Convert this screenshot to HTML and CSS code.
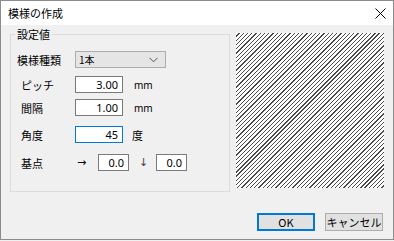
FILE: index.html
```html
<!DOCTYPE html>
<html lang="ja">
<head>
    <meta charset="UTF-8">
    <meta name="viewport" content="width=device-width, initial-scale=1.0">
    <title>模様の作成</title>
    <link rel="stylesheet" href="styles.css">
</head>
<body>
    <div class="window">
        <div class="titlebar">
            <span class="title">模様の作成</span>
            <svg class="close" width="11" height="11" viewBox="0 0 11 11">
                <path d="M0.5 0.5 L10.5 10.5 M10.5 0.5 L0.5 10.5" stroke="#000" stroke-width="1" fill="none"/>
            </svg>
        </div>

        <div class="content">
            <div class="main">
                <div class="group">
                    <span class="group-title">設定値</span>

                    <div class="row row-type">
                        <label class="label label-wide">模様種類</label>
                        <div class="combo">
                            <span>1本</span>
                            <svg width="9" height="6" viewBox="0 0 9 6">
                                <path d="M0.5 0.8 L4.5 4.8 L8.5 0.8" stroke="#555" stroke-width="1" fill="none"/>
                            </svg>
                        </div>
                    </div>

                    <div class="row row-pitch">
                        <label class="label">ピッチ</label>
                        <input class="num" type="text" value="3.00">
                        <span class="unit">mm</span>
                    </div>

                    <div class="row row-gap">
                        <label class="label">間隔</label>
                        <input class="num" type="text" value="1.00">
                        <span class="unit">mm</span>
                    </div>

                    <div class="row row-angle">
                        <label class="label">角度</label>
                        <input class="num focus" type="text" value="45">
                        <span class="unit unit-deg">度</span>
                    </div>

                    <div class="row row-base">
                        <label class="label">基点</label>
                        <span class="arrow arrow-right">→</span>
                        <input class="num small" type="text" value="0.0">
                        <span class="arrow arrow-down">↓</span>
                        <input class="num small" type="text" value="0.0">
                    </div>
                </div>

                <div class="preview"></div>
            </div>

            <div class="buttons">
                <button class="btn btn-default">OK</button>
                <button class="btn">キャンセル</button>
            </div>
        </div>
    </div>
</body>
</html>
```

FILE: styles.css
```css
* {
    box-sizing: border-box;
}

body {
    margin: 0;
    font-family: "Noto Sans", "Noto Sans CJK JP", sans-serif;
    font-size: 11px;
    color: #000;
    background-color: #f0f0f0;
}

.window {
    width: 394px;
    height: 240px;
    border: 1px solid #8c8c8c;
    background-color: #f0f0f0;
    display: flex;
    flex-direction: column;
}

.titlebar {
    height: 24px;
    background-color: #fff;
    display: flex;
    align-items: center;
    justify-content: space-between;
    padding: 0 7px 0 7px;
}

.title {
    font-family: "Noto Sans CJK JP", sans-serif;
    font-size: 11px;
    line-height: 14px;
}

.close {
    display: block;
}

.content {
    flex: 1;
    padding: 8px 9px 0 9px;
}

.main {
    display: flex;
    align-items: flex-start;
    gap: 6px;
}

/* group box */
.group {
    position: relative;
    width: 220px;
    height: 158px;
    margin-top: 1px;
    border: 1px solid #dcdcdc;
    padding: 16px 0 0 10px;
}

.group-title {
    position: absolute;
    top: -9px;
    left: 4px;
    padding: 0 2px;
    background-color: #f0f0f0;
    font-family: "Noto Sans CJK JP", sans-serif;
    line-height: 16px;
}

.row {
    display: flex;
    align-items: center;
    height: 17px;
}

.row-pitch {
    margin-top: 8px;
}

.row-gap {
    margin-top: 6px;
}

.row-angle {
    margin-top: 10px;
}

.row-base {
    margin-top: 11px;
}

.label {
    width: 54px;
    font-family: "Noto Sans CJK JP", sans-serif;
    line-height: 16px;
}

.label-wide {
    margin-left: -4px;
    width: 58px;
}

.combo {
    width: 91px;
    height: 17px;
    background-color: #e5e5e5;
    border: 1px solid #adadad;
    display: flex;
    align-items: center;
    justify-content: space-between;
    padding: 0 7px 0 3px;
    font-family: "Noto Sans CJK JP", sans-serif;
    font-size: 10px;
}

.combo svg {
    display: block;
}

.num {
    width: 48px;
    height: 17px;
    margin: 0;
    border: 1px solid #7a7a7a;
    background-color: #fff;
    padding: 0 4px 0 2px;
    font-family: "Noto Sans", sans-serif;
    font-size: 11px;
    text-align: right;
    color: #000;
    outline: none;
}

.num.focus {
    border-color: #0078d7;
}

.num.small {
    width: 31px;
}

.unit {
    margin-left: 11px;
    font-size: 10px;
}

.unit-deg {
    margin-left: 9px;
    font-family: "Noto Sans CJK JP", sans-serif;
    font-size: 11px;
}

.arrow {
    font-family: "DejaVu Sans", sans-serif;
    font-size: 11px;
}

.arrow-right {
    margin-left: 2px;
    width: 21px;
}

.arrow-down {
    width: 27px;
    padding-left: 10px;
    color: #444;
}

/* hatch preview */
.preview {
    width: 148px;
    height: 155px;
    background-color: #fff;
    background-image: repeating-linear-gradient(135deg, #fff 0 2.1px, #4a4a4a 2.1px 3px);
}

/* dialog buttons */
.buttons {
    display: flex;
    justify-content: flex-end;
    gap: 10px;
    margin-top: 21px;
    padding-right: 1px;
}

.btn {
    width: 58px;
    height: 18px;
    padding: 0;
    background-color: #e1e1e1;
    border: 1px solid #adadad;
    font-family: "Noto Sans CJK JP", sans-serif;
    font-size: 11px;
    line-height: 14px;
    color: #000;
}

.btn-default {
    border: 2px solid #0078d7;
}
```
